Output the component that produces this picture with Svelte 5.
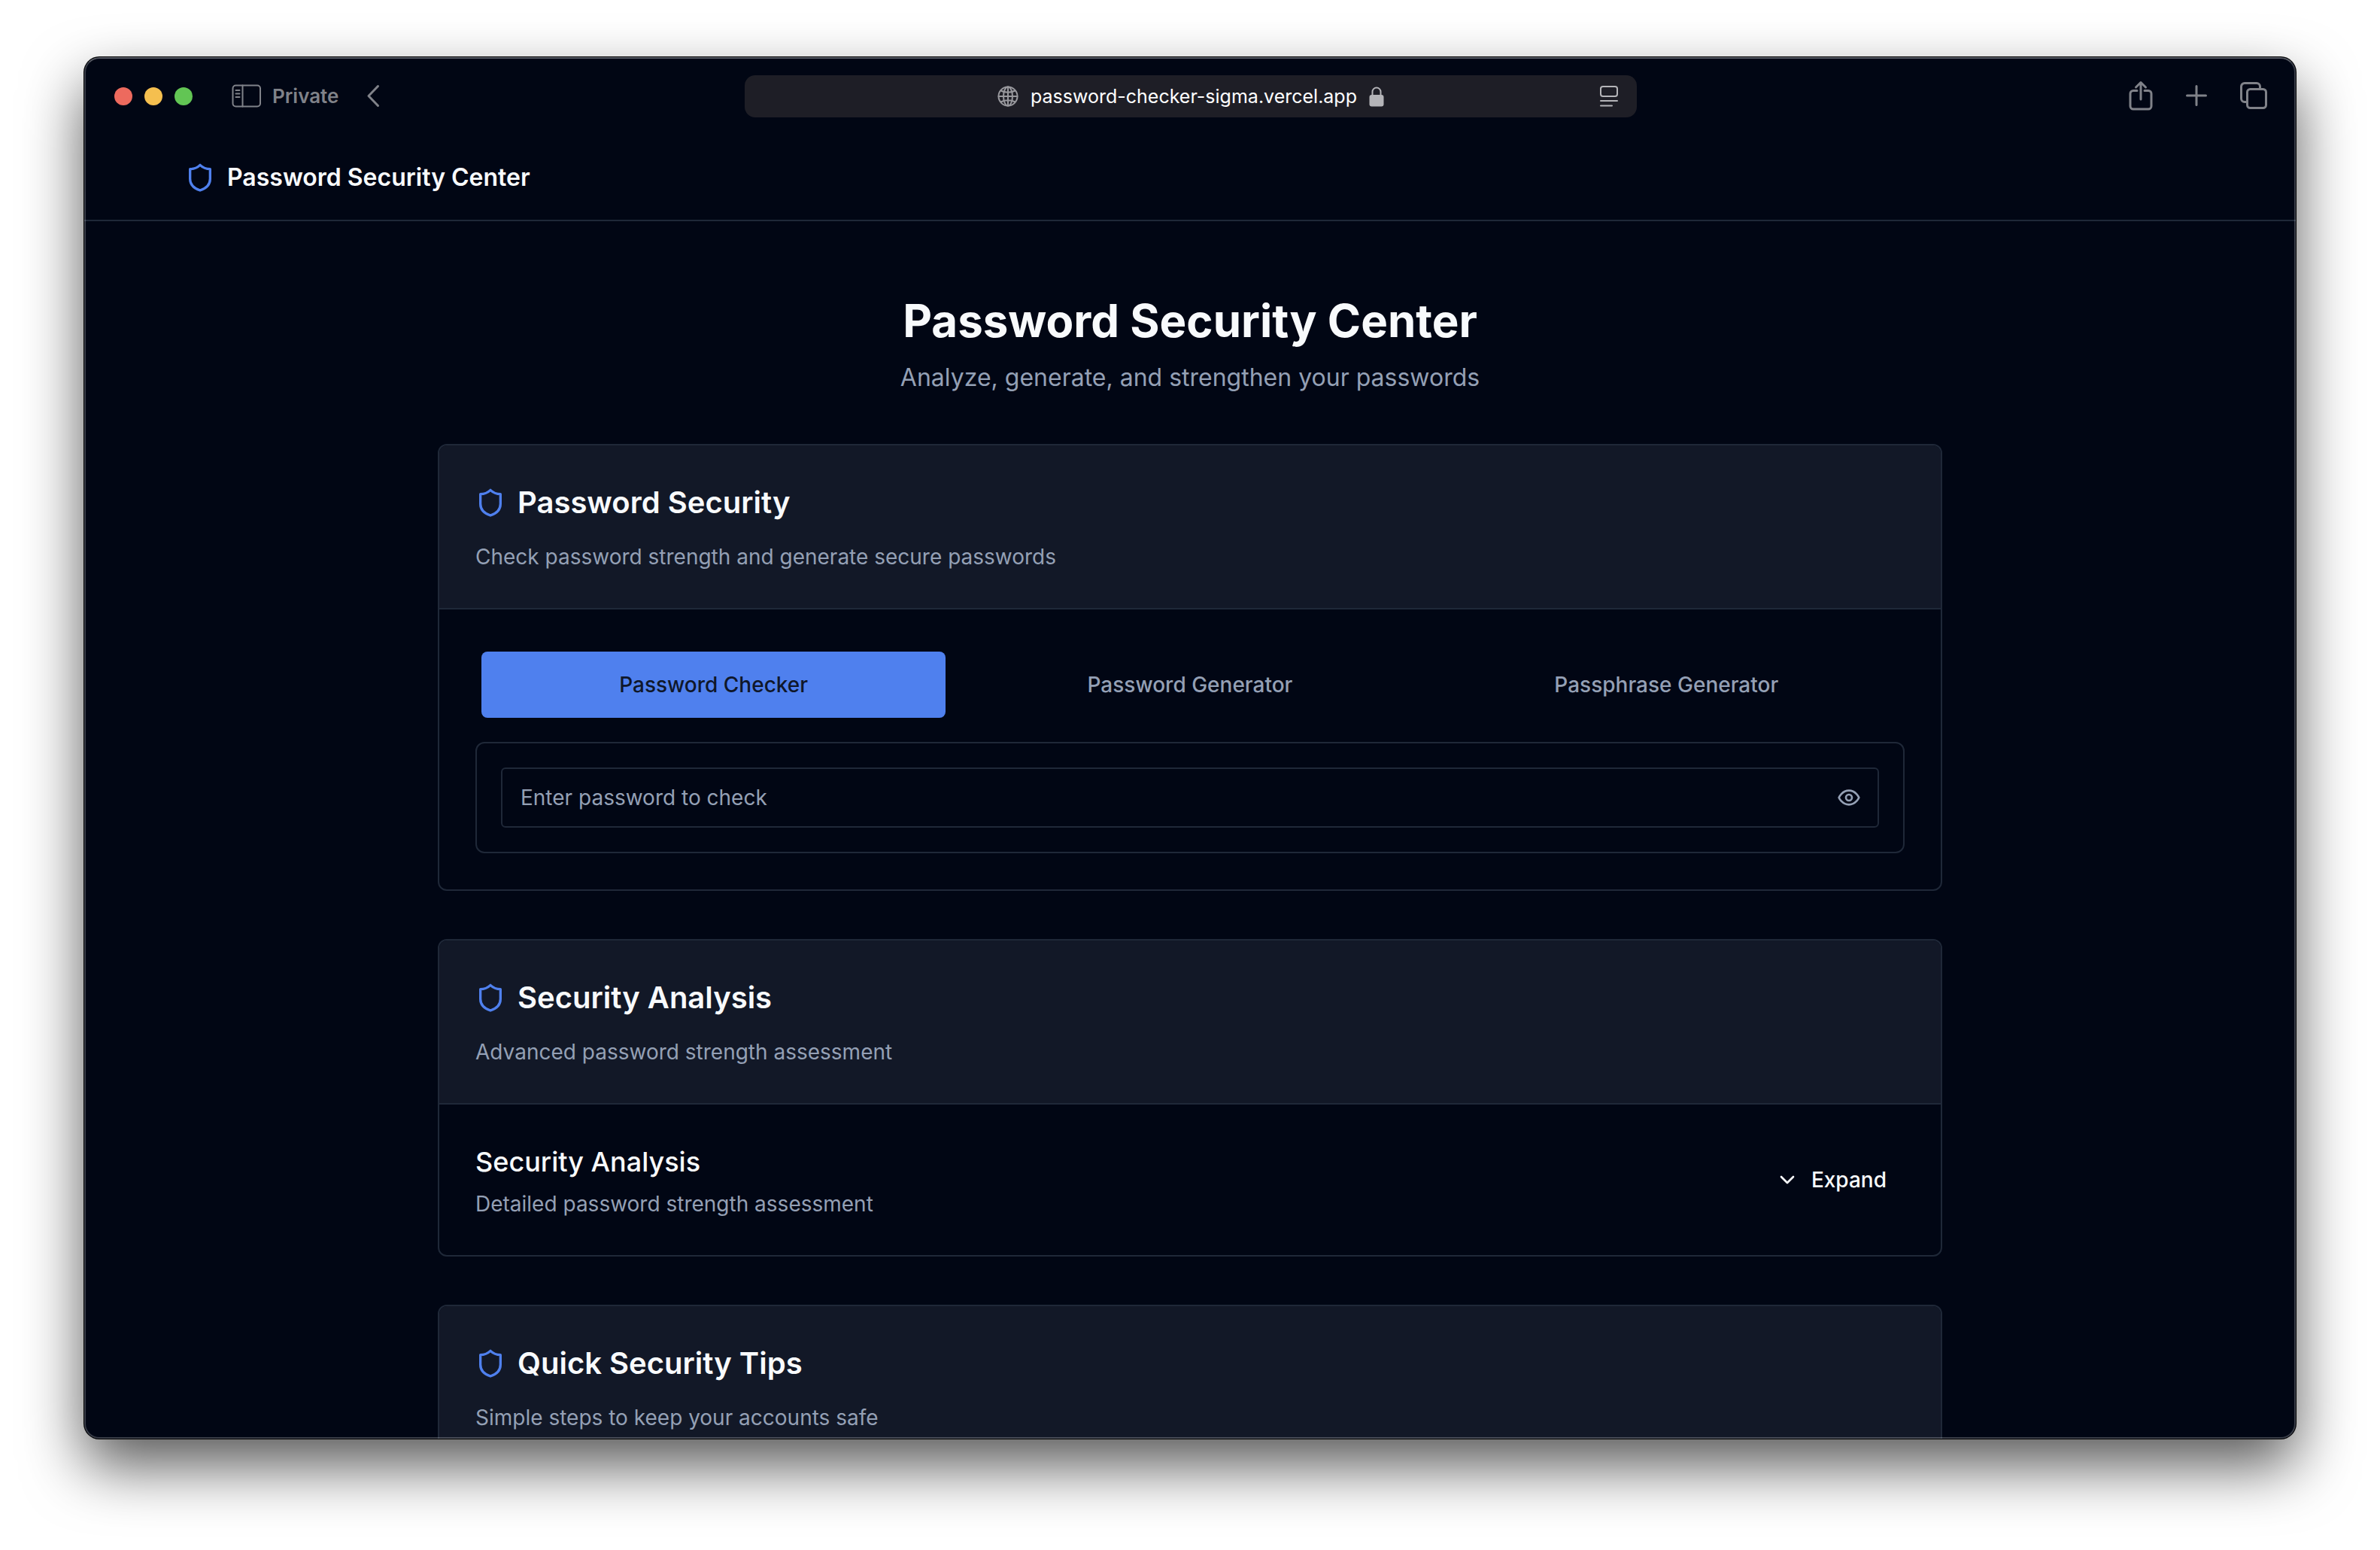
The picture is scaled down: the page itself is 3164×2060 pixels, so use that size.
<script>
  let show = $state(false);
  let expanded = $state(false);
  let active = $state(0);
  let password = $state('');
  const tabs = ['Password Checker', 'Password Generator', 'Passphrase Generator'];
</script>

{#snippet shield()}
  <svg class="shield" viewBox="0 0 24 24" aria-hidden="true">
    <path d="M20 13c0 5-3.500 7.700-8 9.200C7.500 20.700 4 18 4 13V5.200c3 0 6-1.300 8-3.200 2 1.900 5 3.200 8 3.200z" />
  </svg>
{/snippet}

{#snippet cardHead(title, text)}
  <header class="card-head">
    <h2>{@render shield()}{title}</h2>
    <p>{text}</p>
  </header>
{/snippet}

<div class="desktop">
  <div class="window">
    <div class="toolbar">
      <div class="side">
        <div class="lights">
          <button class="light red" aria-label="Close"></button>
          <button class="light yellow" aria-label="Minimize"></button>
          <button class="light green" aria-label="Zoom"></button>
        </div>
        <button class="tool private">
          <svg width="40" height="32" viewBox="0 0 40 32" aria-hidden="true">
            <rect x="1.5" y="1.5" width="36.5" height="28" rx="4" />
            <path d="M14.500 1.500v28M5.500 8h5M5.500 12.500h5M5.500 17h5" />
          </svg>
          <span>Private</span>
        </button>
        <button class="tool back" aria-label="Back">
          <svg width="20" height="32" viewBox="0 0 20 32" aria-hidden="true">
            <path d="M16.500 2.500 4 15.500l12.500 13" />
          </svg>
        </button>
      </div>

      <div class="address">
        <span></span>
        <div class="url">
          <svg class="globe" width="28" height="28" viewBox="0 0 28 28" aria-hidden="true">
            <circle cx="14" cy="14" r="12.500" />
            <ellipse cx="14" cy="14" rx="6" ry="12.500" />
            <path d="M14 1.500v25M1.500 14h25M4.500 6.500c5.500 3 13.500 3 19 0M4.500 21.500c5.500-3 13.500-3 19 0" />
          </svg>
          <span>password-checker-sigma.vercel.app</span>
          <svg class="lock" width="20" height="28" viewBox="0 0 20 28" aria-hidden="true">
            <path d="M4.500 13V8a5.500 5.500 0 0 1 11 0v5" />
            <rect x="0.500" y="12" width="19" height="15.500" rx="3" />
          </svg>
        </div>
        <button class="tool reader" aria-label="Page menu">
          <svg width="26" height="30" viewBox="0 0 26 30" aria-hidden="true">
            <rect x="2" y="2" width="22" height="13" rx="3" />
            <path d="M2 21h22M2 27.500h15" />
          </svg>
        </button>
      </div>

      <div class="side end">
        <button class="tool" aria-label="Share">
          <svg width="32" height="40" viewBox="0 0 32 40" aria-hidden="true">
            <path d="M11 13.500H6a4 4 0 0 0-4 4V34a4 4 0 0 0 4 4h20a4 4 0 0 0 4-4V17.500a4 4 0 0 0-4-4h-5M16 25V3M9.500 9 16 2.500 22.500 9" />
          </svg>
        </button>
        <button class="tool" aria-label="New tab">
          <svg width="28" height="28" viewBox="0 0 28 28" aria-hidden="true">
            <path d="M14 1.500v25M1.500 14h25" />
          </svg>
        </button>
        <button class="tool" aria-label="Tab overview">
          <svg width="36" height="36" viewBox="0 0 36 36" aria-hidden="true">
            <rect x="9.500" y="9.500" width="25" height="25" rx="4" />
            <path d="M9.500 26.500H6a4.500 4.500 0 0 1-4.500-4.500V6A4.500 4.500 0 0 1 6 1.500h16A4.500 4.500 0 0 1 26.500 6v3.500" />
          </svg>
        </button>
      </div>
    </div>

    <div class="page">
      <header class="site">
        <div class="container">{@render shield()}<span>Password Security Center</span></div>
      </header>

      <main>
        <div class="hero">
          <h1>Password Security Center</h1>
          <p>Analyze, generate, and strengthen your passwords</p>
        </div>

        <section class="card">
          {@render cardHead('Password Security', 'Check password strength and generate secure passwords')}
          <div class="card-body">
            <div class="tabs" role="tablist">
              {#each tabs as tab, i}
                <button role="tab" class="tab" class:active={active === i} aria-selected={active === i} onclick={() => (active = i)}>{tab}</button>
              {/each}
            </div>
            <div class="panel">
              <div class="field">
                <input type={show ? 'text' : 'password'} bind:value={password} placeholder="Enter password to check" aria-label="Enter password to check" />
                <button class="eye" aria-label="Show password" onclick={() => (show = !show)}>
                  <svg viewBox="0 0 24 24" aria-hidden="true">
                    <path d="M2 12s3-7 10-7 10 7 10 7-3 7-10 7-10-7-10-7Z" />
                    <circle cx="12" cy="12" r="3" />
                  </svg>
                </button>
              </div>
            </div>
          </div>
        </section>

        <section class="card">
          {@render cardHead('Security Analysis', 'Advanced password strength assessment')}
          <div class="card-body analysis">
            <div>
              <h3>Security Analysis</h3>
              <p>Detailed password strength assessment</p>
            </div>
            <button class="expand" aria-expanded={expanded} onclick={() => (expanded = !expanded)}>
              <svg viewBox="0 0 24 24" aria-hidden="true"><path d="m6 9 6 6 6-6" /></svg>
              Expand
            </button>
          </div>
        </section>

        <section class="card">
          {@render cardHead('Quick Security Tips', 'Simple steps to keep your accounts safe')}
        </section>
      </main>
    </div>
  </div>
</div>

<style>
  :global(body) {
    background: #fff;
  }

  .desktop {
    --bg: #010614;
    --surface: #121827;
    --line: #1f2838;
    --text: #f8fafc;
    --muted: #94a0b5;
    --blue: #4f80ee;
    box-sizing: border-box;
    height: 100vh;
    padding: 76px 112px 148px;
    font-family: Inter, "Liberation Sans", sans-serif;
    font-size: 28px;
    line-height: 40px;
    color: var(--text);
  }

  .desktop * {
    box-sizing: border-box;
  }

  h1, h2, h3, p {
    margin: 0;
  }

  button {
    padding: 0;
    border: 0;
    background: none;
    color: inherit;
    font: inherit;
  }

  svg {
    display: block;
    flex: none;
    fill: none;
    stroke: currentColor;
    stroke-width: 2;
    stroke-linecap: round;
    stroke-linejoin: round;
  }

  .window {
    position: relative;
    display: flex;
    flex-direction: column;
    height: 100%;
    border-radius: 20px;
    background: var(--bg);
    box-shadow: 0 0 0 1px #000, 0 36px 80px rgba(0, 0, 0, 0.66);
    overflow: hidden;
  }

  .window::after {
    content: "";
    position: absolute;
    inset: 0;
    border: 2px solid rgba(255, 255, 255, 0.22);
    border-top-color: rgba(255, 255, 255, 0.34);
    border-radius: 20px;
    pointer-events: none;
  }

  .toolbar {
    flex: none;
    display: flex;
    align-items: center;
    height: 104px;
    padding: 0 38px 0 40px;
    font-size: 26px;
    line-height: 32px;
  }

  .side {
    flex: 1;
    display: flex;
    align-items: center;
  }

  .end {
    justify-content: flex-end;
    gap: 44px;
    padding-bottom: 2px;
  }

  .lights {
    display: flex;
    gap: 16px;
    margin-right: 52px;
  }

  .light {
    width: 24px;
    height: 24px;
    border-radius: 50%;
  }

  .red { background: #ed6a5e; }
  .yellow { background: #f5bf4f; }
  .green { background: #62c554; }

  .tool {
    color: #808289;
  }

  .tool svg {
    stroke-width: 3;
  }

  .private {
    display: flex;
    align-items: center;
    gap: 14px;
    margin-right: 36px;
    font-weight: 600;
  }

  .private svg {
    stroke-width: 2;
  }

  .address {
    flex: 0 1 1186px;
    display: grid;
    grid-template-columns: 1fr auto 1fr;
    align-items: center;
    height: 56px;
    padding: 0 24px;
    border-radius: 14px;
    background: #1e1e26;
    color: #fff;
    font-size: 25px;
  }

  .url {
    display: flex;
    align-items: center;
    gap: 16px;
  }

  .globe {
    color: #98989d;
  }

  .lock {
    color: #b4b4b8;
  }

  .lock rect {
    fill: currentColor;
    stroke: none;
  }

  .reader {
    justify-self: end;
    color: #b4b4b8;
  }

  .reader svg {
    stroke-width: 2;
  }

  .page {
    flex: 1;
    min-height: 0;
    overflow: hidden;
  }

  .site {
    border-bottom: 2px solid var(--line);
  }

  .container {
    display: flex;
    align-items: center;
    gap: 16px;
    max-width: 2800px;
    height: 112px;
    margin: 0 auto;
    padding: 0 64px;
    font-size: 32px;
    font-weight: 600;
  }

  .shield {
    width: 40px;
    height: 40px;
    color: var(--blue);
  }

  main {
    display: flex;
    flex-direction: column;
    gap: 64px;
    max-width: 2000px;
    margin: 0 auto;
    padding: 96px 0;
  }

  .hero {
    display: flex;
    flex-direction: column;
    gap: 16px;
    text-align: center;
  }

  h1 {
    font-size: 60px;
    font-weight: 700;
    line-height: 72px;
  }

  .hero p {
    font-size: 32px;
    line-height: 48px;
    color: var(--muted);
  }

  .card {
    border: 2px solid var(--line);
    border-radius: 12px;
    overflow: hidden;
  }

  .card-head {
    display: flex;
    flex-direction: column;
    gap: 24px;
    padding: 48px;
    background: var(--surface);
    border-bottom: 2px solid var(--line);
  }

  h2 {
    display: flex;
    align-items: center;
    gap: 16px;
    font-size: 40px;
    font-weight: 600;
    line-height: 56px;
  }

  .card p {
    color: var(--muted);
  }

  .card-body {
    padding: 48px;
  }

  .tabs {
    display: grid;
    grid-template-columns: repeat(3, 1fr);
    gap: 16px;
    padding: 8px;
    margin-bottom: 24px;
  }

  .tab {
    height: 88px;
    border-radius: 8px;
    color: var(--muted);
    font-weight: 500;
  }

  .tab.active {
    background: var(--blue);
    color: #0f172a;
  }

  .panel {
    padding: 32px;
    border: 2px solid var(--line);
    border-radius: 12px;
  }

  .field {
    display: flex;
    align-items: center;
    height: 80px;
    padding: 0 22px 0 24px;
    border: 2px solid var(--line);
    border-radius: 6px;
  }

  input {
    flex: 1;
    min-width: 0;
    padding: 0;
    border: 0;
    outline: 0;
    background: none;
    color: inherit;
    font: inherit;
  }

  input::placeholder {
    color: var(--muted);
    opacity: 1;
  }

  .eye {
    color: var(--muted);
  }

  .eye svg, .expand svg {
    width: 32px;
    height: 32px;
  }

  .analysis {
    display: flex;
    align-items: center;
    justify-content: space-between;
  }

  h3 {
    margin-bottom: 8px;
    font-size: 36px;
    font-weight: 500;
    line-height: 56px;
  }

  .expand {
    display: flex;
    align-items: center;
    gap: 16px;
    padding: 16px 24px;
    font-weight: 500;
  }
</style>
